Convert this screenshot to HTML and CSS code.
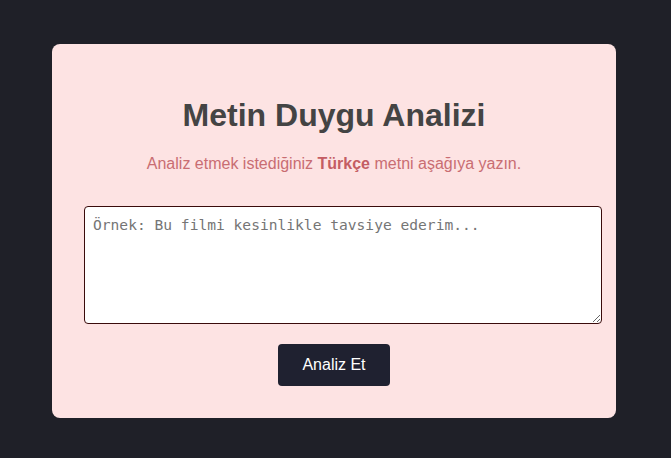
FILE: index.html
```html
<!DOCTYPE html>
<html lang="tr">
<head>
<meta charset="utf-8">
<title>Metin Duygu Analizi</title>
<link rel="stylesheet" href="styles.css">
</head>
<body>
<div class="card">
  <h1 class="title">Metin Duygu Analizi</h1>
  <p class="subtitle">Analiz etmek istediğiniz <strong>Türkçe</strong> metni aşağıya yazın.</p>
  <textarea class="input" placeholder="Örnek: Bu filmi kesinlikle tavsiye ederim..."></textarea>
  <button class="btn">Analiz Et</button>
</div>
</body>
</html>
```
FILE: styles.css
```css
html, body {
  margin: 0;
  padding: 0;
}
body {
  background: #1f2028;
  font-family: "Liberation Sans", Arial, sans-serif;
  padding: 44px 55px 0 52px;
  height: 458px;
  box-sizing: border-box;
}
.card {
  width: 564px;
  height: 374px;
  box-sizing: border-box;
  background: #fde3e3;
  border-radius: 8px;
  padding: 32px;
  display: flex;
  flex-direction: column;
  align-items: flex-start;
}
.title {
  align-self: stretch;
  text-align: center;
  font-size: 32px;
  font-weight: bold;
  color: #444444;
  margin: 21px 0 21px;
  line-height: 37px;
}
.subtitle {
  align-self: stretch;
  text-align: center;
  font-size: 16px;
  color: #c96d72;
  margin: 0;
  line-height: 18px;
}
.subtitle strong {
  color: #c45d63;
}
.input {
  margin-top: 33px;
  width: 500px;
  height: 100px;
  padding: 8px;
  border: 1px solid #3a0b0b;
  border-radius: 4px;
  background: #ffffff;
  font-family: "DejaVu Sans Mono", monospace;
  font-size: 14.6px;
  line-height: 20px;
  resize: vertical;
}
.input::placeholder {
  color: #757575;
}
.btn {
  margin-top: 20px;
  margin-left: 194px;
  width: 112px;
  height: 42px;
  background: #1f2130;
  color: #ffffff;
  border: none;
  border-radius: 4px;
  font-family: "Liberation Sans", Arial, sans-serif;
  font-size: 16px;
}
```
